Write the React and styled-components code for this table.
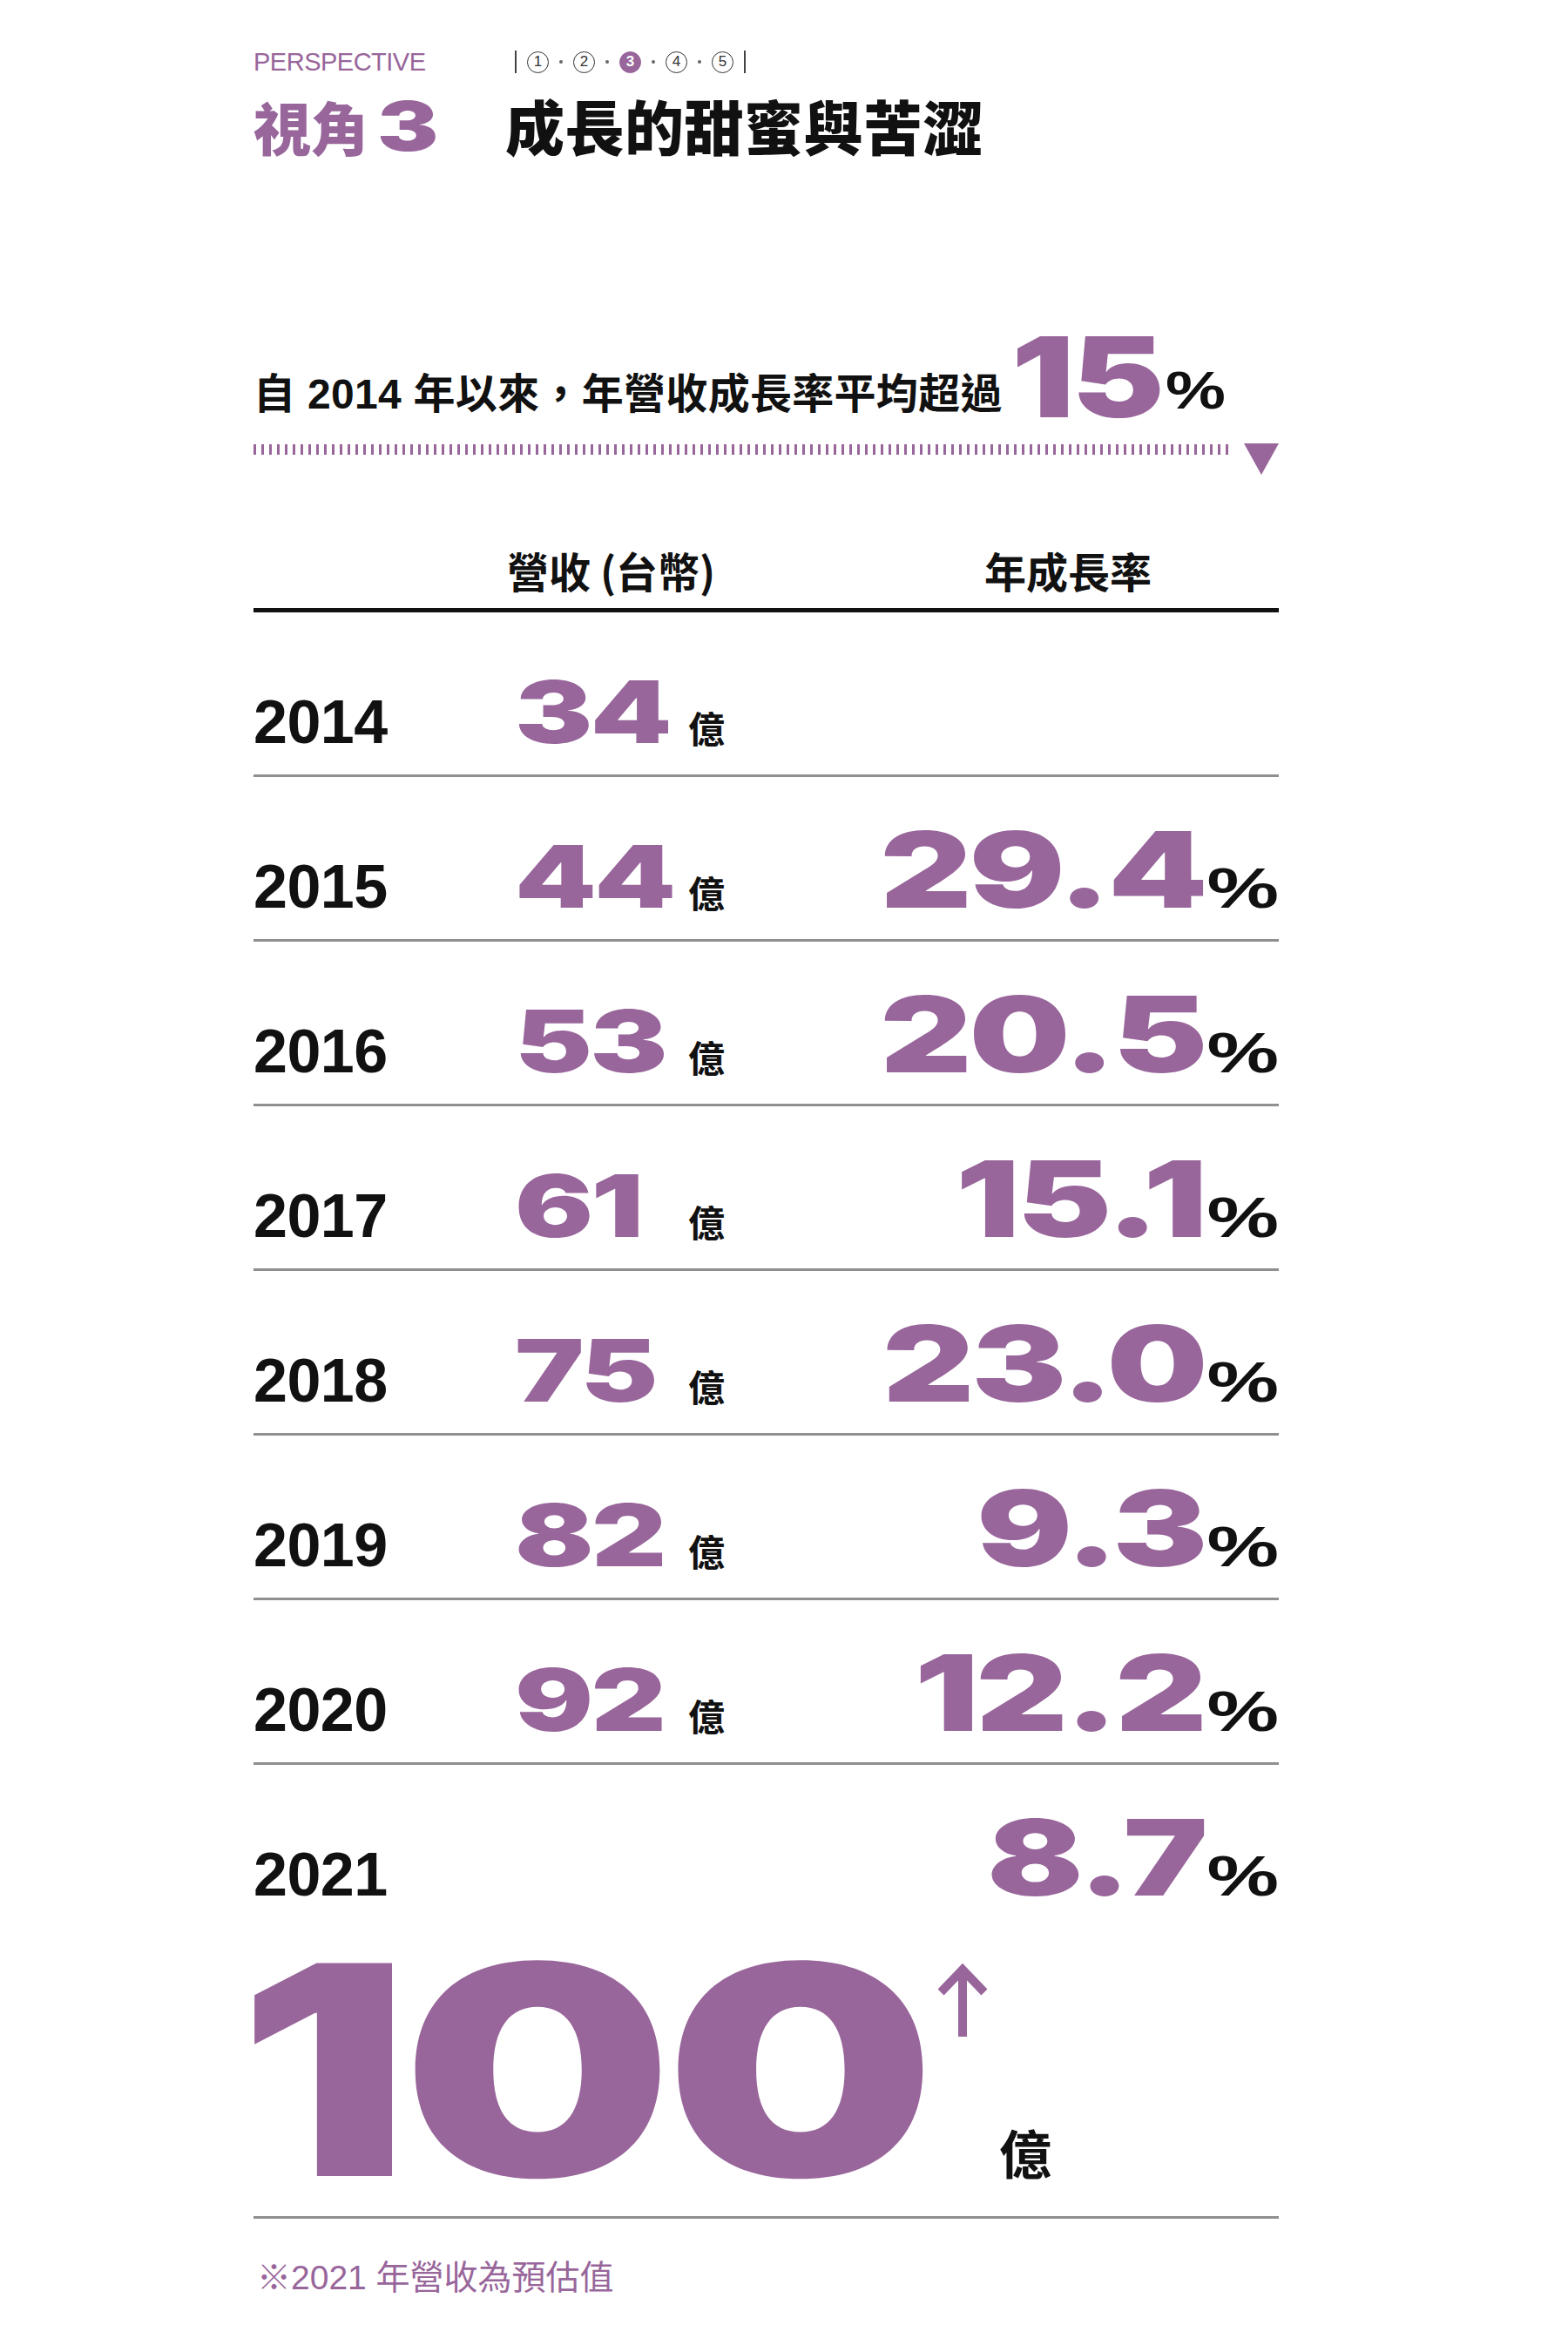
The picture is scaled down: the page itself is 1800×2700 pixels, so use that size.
import React from 'react';
import styled, { createGlobalStyle } from 'styled-components';

const PURPLE = '#98669b';
const INK = '#111';
const SANS = '"Liberation Sans", "Noto Sans CJK TC", sans-serif';
const CJK = '"Noto Sans CJK TC", "Liberation Sans", sans-serif';
const WIDE = 'Inter, "DejaVu Sans", sans-serif';

const GlobalStyle = createGlobalStyle`
  body {
    margin: 0;
    background: #fff;
    color: ${INK};
    font-family: ${SANS};
  }
`;

const Page = styled.div`
  width: 1800px;
  min-height: 2700px;
  box-sizing: border-box;
  padding: 56px 0 0 291px;
`;

// wide, heavy numerals: a stretched black face
const Wide = styled.span`
  display: inline-block;
  font-family: ${WIDE};
  font-weight: 900;
  font-size: ${p => p.$fs}px;
  line-height: 1;
  letter-spacing: ${p => (p.$ls != null ? p.$ls : -0.02)}em;
  color: ${p => p.$color || PURPLE};
  white-space: nowrap;
  transform: translateY(${p => p.$dy || 0}px) scaleX(${p => p.$sx || 1.35});
  transform-origin: ${p => p.$origin || 'left'} center;
`;

const Slot = styled.span`
  display: inline-block;
  flex: 0 0 ${p => p.$w}px;
  width: ${p => p.$w}px;
  margin-left: ${p => p.$ml || 0}px;
  line-height: 1;
`;

const Pct = styled.span`
  display: inline-block;
  font-family: "Liberation Sans", sans-serif;
  font-weight: 700;
  font-size: ${p => p.$fs}px;
  line-height: 1;
  color: ${INK};
  transform: scaleX(${p => p.$sx || 1.45});
  transform-origin: ${p => p.$origin || 'right'} center;
`;

/* ---------- header ---------- */

const TopLine = styled.div`
  display: flex;
  align-items: center;
  height: 30px;
`;

const Kicker = styled.div`
  flex: 0 0 300px;
  font-family: "Liberation Sans", sans-serif;
  font-size: 29px;
  line-height: 30px;
  letter-spacing: -0.5px;
  color: ${PURPLE};
`;

const Steps = styled.div`
  display: flex;
  align-items: center;
  gap: 12px;
`;

const Bar = styled.span`
  width: 2px;
  height: 26px;
  background: #444;
`;

const Step = styled.span`
  width: 25px;
  height: 25px;
  box-sizing: border-box;
  border-radius: 50%;
  border: 1.5px solid ${p => (p.$on ? PURPLE : '#333')};
  background: ${p => (p.$on ? PURPLE : 'transparent')};
  color: ${p => (p.$on ? '#fff' : '#333')};
  font-family: "Liberation Sans", sans-serif;
  font-weight: ${p => (p.$on ? 700 : 400)};
  font-size: 17px;
  line-height: 22px;
  text-align: center;
`;

const Dot = styled.span`
  width: 4px;
  height: 4px;
  border-radius: 50%;
  background: #666;
`;

const TitleLine = styled.div`
  display: flex;
  align-items: baseline;
  margin-top: 20px;
`;

const Badge = styled.div`
  flex: 0 0 289px;
  font-family: ${CJK};
  font-weight: 900;
  font-size: 66px;
  line-height: 1;
  color: ${PURPLE};
  white-space: nowrap;
`;

const Title = styled.h1`
  margin: 0;
  font-family: ${CJK};
  font-weight: 900;
  font-size: 68px;
  line-height: 1;
  letter-spacing: 0.5px;
  color: ${INK};
`;

/* ---------- lead ---------- */

const Lead = styled.div`
  display: flex;
  align-items: baseline;
  margin-top: 175px;
`;

const LeadText = styled.span`
  font-family: ${SANS};
  font-weight: 700;
  font-size: 48px;
  line-height: 1;
  letter-spacing: 0.3px;
`;

const Divider = styled.div`
  display: flex;
  align-items: flex-start;
  width: 1177px;
  margin-top: 22px;
`;

const Ticks = styled.div`
  flex: 0 0 1121px;
  height: 12px;
  margin-top: 1px;
  background: repeating-linear-gradient(
    to right,
    ${PURPLE} 0 3px,
    transparent 3px 9px
  );
`;

const Triangle = styled.div`
  width: 0;
  height: 0;
  margin-left: 16px;
  border-left: 20px solid transparent;
  border-right: 20px solid transparent;
  border-top: 36px solid ${PURPLE};
`;

/* ---------- table ---------- */

const Table = styled.section`
  width: 1177px;
  margin-top: 85px;
`;

const HeadRow = styled.div`
  display: grid;
  grid-template-columns: 291px 548px auto;
  padding-bottom: 20px;
  border-bottom: 5px solid ${INK};
`;

const HeadCell = styled.div`
  grid-column: ${p => p.$col};
  font-family: ${CJK};
  font-weight: 700;
  font-size: 48px;
  line-height: 1;
`;

const Row = styled.div`
  display: flex;
  align-items: baseline;
  box-sizing: border-box;
  height: ${p => p.$h || 189}px;
  padding-top: 46px;
  border-bottom: ${p => (p.$last ? 'none' : '3px solid #8f8f8f')};
`;

const Year = styled.span`
  flex: 0 0 300px;
  font-family: "Liberation Sans", sans-serif;
  font-weight: 700;
  font-size: 70px;
  line-height: 1;
  letter-spacing: -0.5px;
`;

const Unit = styled.span`
  font-family: ${CJK};
  font-weight: 700;
  font-size: ${p => p.$fs || 42}px;
  line-height: 1;
`;

const Growth = styled.div`
  display: flex;
  align-items: baseline;
  margin-left: auto;
`;

const Big = styled.div`
  display: flex;
  align-items: stretch;
  height: 336px;
  border-bottom: 3px solid #8f8f8f;
`;

const Side = styled.div`
  display: flex;
  flex-direction: column;
  justify-content: space-between;
  padding: 46px 0 44px;
`;

const Arrow = styled.svg`
  display: block;
  width: 56px;
  height: 84px;
`;

const BigUnit = styled(Unit)`
  margin-left: 70px;
`;

const Note = styled.p`
  margin: 48px 0 0 4px;
  font-family: ${SANS};
  font-size: 39px;
  line-height: 1;
  color: ${PURPLE};
`;

const rows = [
  { year: '2014', rev: '34' },
  { year: '2015', rev: '44', growth: '29.4' },
  { year: '2016', rev: '53', growth: '20.5' },
  { year: '2017', rev: '61', growth: '15.1' },
  { year: '2018', rev: '75', growth: '23.0' },
  { year: '2019', rev: '82', growth: '9.3' },
  { year: '2020', rev: '92', growth: '12.2' },
];

function GrowthCell({ value }) {
  return (
    <Growth>
      <Wide $fs={121} $origin="right" style={{ marginRight: value ? 28 : 0 }}>
        {value || '\u00a0'}
      </Wide>
      {value && <Pct $fs={64}>%</Pct>}
    </Growth>
  );
}

export default function App() {
  return (
    <Page>
      <GlobalStyle />

      <TopLine>
        <Kicker>PERSPECTIVE</Kicker>
        <Steps>
          <Bar />
          <Step>1</Step>
          <Dot />
          <Step>2</Step>
          <Dot />
          <Step $on>3</Step>
          <Dot />
          <Step>4</Step>
          <Dot />
          <Step>5</Step>
          <Bar />
        </Steps>
      </TopLine>

      <TitleLine>
        <Badge>
          視角<Wide $fs={78} style={{ marginLeft: 10 }}>3</Wide>
        </Badge>
        <Title>成長的甜蜜與苦澀</Title>
      </TitleLine>

      <Lead>
        <LeadText>自 2014 年以來，年營收成長率平均超過</LeadText>
        <Slot $w={177} $ml={10}>
          <Wide $fs={128} $sx={1.25} $dy={10}>15</Wide>
        </Slot>
        <Pct $fs={62} $sx={1.25} $origin="left">%</Pct>
      </Lead>

      <Divider>
        <Ticks />
        <Triangle />
      </Divider>

      <Table>
        <HeadRow>
          <HeadCell $col={2}>營收 (台幣)</HeadCell>
          <HeadCell $col={3}>年成長率</HeadCell>
        </HeadRow>

        {rows.map(r => (
          <Row key={r.year}>
            <Year>{r.year}</Year>
            <Slot $w={199}>
              <Wide $fs={99}>{r.rev}</Wide>
            </Slot>
            <Unit>億</Unit>
            <GrowthCell value={r.growth} />
          </Row>
        ))}

        <Row $h={182} $last>
          <Year>2021</Year>
          <GrowthCell value="8.7" />
        </Row>

        <Big>
          <Slot $w={786}>
            <Wide $fs={336} $sx={1.3} style={{ marginLeft: -18 }}>100</Wide>
          </Slot>
          <Side>
            <Arrow viewBox="0 0 56 84" fill="none" stroke={PURPLE} strokeWidth="10">
              <path d="M28 84 V6" />
              <path d="M3 33 L28 7 L53 33" />
            </Arrow>
            <BigUnit $fs={60}>億</BigUnit>
          </Side>
        </Big>
      </Table>

      <Note>※2021 年營收為預估值</Note>
    </Page>
  );
}
